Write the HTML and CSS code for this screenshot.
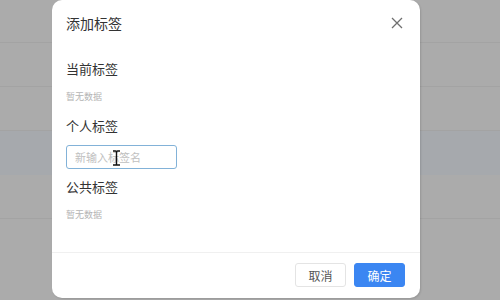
FILE: index.html
```html
<!DOCTYPE html>
<html lang="zh">
<head>
    <meta charset="UTF-8">
    <title>添加标签</title>
    <link rel="stylesheet" href="styles.css">
</head>
<body>
<!--背景列表-->
<div class="page">
    <div class="row"></div>
    <div class="row"></div>
    <div class="row"></div>
    <div class="row row-hover"></div>
    <div class="row"></div>
</div>
<!--弹窗-->
<div class="modal">
    <div class="modal-head">
        <span class="modal-title">添加标签</span>
        <svg class="modal-close" width="12" height="12" viewBox="0 0 12 12">
            <path d="M1 1L11 11M11 1L1 11" stroke="#6f6f6f" stroke-width="1.3" fill="none"/>
        </svg>
    </div>
    <div class="modal-body">
        <div class="tag-title first">当前标签</div>
        <div class="tag-empty">暂无数据</div>
        <div class="tag-title">个人标签</div>
        <div class="input-wrap">
            <input type="text" class="tag-input" placeholder="新输入标签名">
            <svg class="cursor" width="9" height="16" viewBox="0 0 9 16">
                <path d="M1 1H3.5Q4.5 1 4.5 2V14Q4.5 15 3.5 15H1M8 1H5.5Q4.5 1 4.5 2M4.5 14Q4.5 15 5.5 15H8" stroke="#111" stroke-width="1.4" fill="none"/>
            </svg>
        </div>
        <div class="tag-title after-input">公共标签</div>
        <div class="tag-empty">暂无数据</div>
    </div>
    <div class="modal-foot">
        <button class="btn">取消</button>
        <button class="btn btn-primary">确定</button>
    </div>
</div>
</body>
</html>
```

FILE: styles.css
```css
html, body{
    margin: 0;
    padding: 0;
    height: 100%;
}
body{
    background-color: #ababab;
    font-family: "Noto Sans CJK SC", "Noto Sans", sans-serif;
    overflow: hidden;
}
.page{
    display: flex;
    flex-direction: column;
}
.row{
    height: 43px;
    border-bottom: 1px solid #a3a3a3;
}
.row:first-child{
    height: 42px;
}
.row-hover{
    background-color: #a6a9ad;
    border-bottom-color: #a6a9ad;
}
.modal{
    position: absolute;
    left: 52px;
    top: 0;
    width: 368px;
    height: 298px;
    background-color: #fff;
    border-radius: 10px;
    display: flex;
    flex-direction: column;
    box-shadow: 1px 1px 2px rgba(0,0,0,0.12);
}
.modal-head{
    height: 46px;
    padding: 0 17px 0 14px;
    display: flex;
    align-items: center;
    justify-content: space-between;
}
.modal-title{
    font-size: 14px;
    color: #333;
}
.modal-body{
    flex: 1;
    padding: 0 14px;
}
.tag-title{
    font-size: 13px;
    line-height: 20px;
    color: #333;
    margin-top: 12px;
}
.tag-title.first{
    margin-top: 13px;
}
.tag-title.after-input{
    margin-top: 8px;
}
.tag-empty{
    font-size: 9px;
    line-height: 14px;
    color: #b4b4b4;
    margin-top: 11px;
}
.input-wrap{
    position: relative;
    margin-top: 7px;
    width: 111px;
}
.tag-input{
    box-sizing: border-box;
    width: 111px;
    height: 24px;
    border: 1px solid #82b2d8;
    border-radius: 3px;
    padding: 0 8px;
    font-family: inherit;
    font-size: 11px;
    color: #333;
    outline: none;
}
.tag-input::placeholder{
    color: #c0c0c0;
}
.cursor{
    position: absolute;
    left: 46px;
    top: 7px;
}
.modal-foot{
    height: 46px;
    border-top: 1px solid #f0f0f0;
    display: flex;
    justify-content: flex-end;
    align-items: flex-start;
    gap: 8px;
    padding: 10px 15px 0 0;
    box-sizing: border-box;
}
.btn{
    width: 51px;
    height: 24px;
    border: 1px solid #e4e4e4;
    border-radius: 3px;
    background-color: #fff;
    color: #555;
    font-family: inherit;
    font-size: 12px;
    padding: 0;
}
.btn-primary{
    background-color: #3b86f2;
    border-color: #3b86f2;
    color: #fff;
}
```
